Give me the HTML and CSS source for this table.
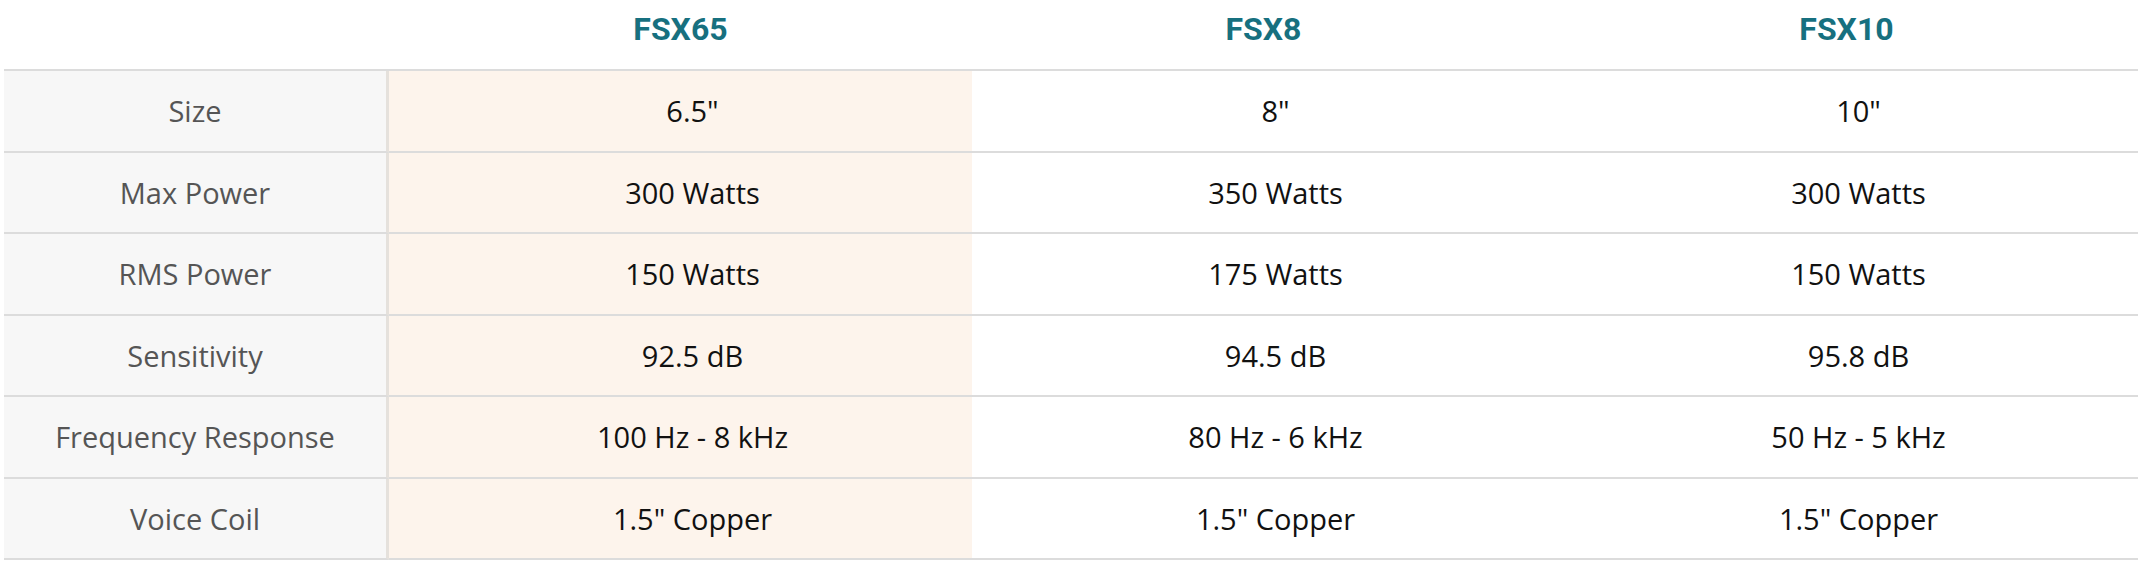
FILE: index.html
```html
<!DOCTYPE html>
<html lang="en">
<head>
<meta charset="utf-8">
<title>Speaker comparison</title>
<link rel="stylesheet" href="styles.css">
</head>
<body>
<div class="specs">
  <div class="head blank"></div>
  <div class="head">FSX65</div>
  <div class="head">FSX8</div>
  <div class="head">FSX10</div>

  <div class="cell label">Size</div>
  <div class="cell value hl">6.5"</div>
  <div class="cell value">8"</div>
  <div class="cell value">10"</div>

  <div class="cell label">Max Power</div>
  <div class="cell value hl">300 Watts</div>
  <div class="cell value">350 Watts</div>
  <div class="cell value">300 Watts</div>

  <div class="cell label">RMS Power</div>
  <div class="cell value hl">150 Watts</div>
  <div class="cell value">175 Watts</div>
  <div class="cell value">150 Watts</div>

  <div class="cell label">Sensitivity</div>
  <div class="cell value hl">92.5 dB</div>
  <div class="cell value">94.5 dB</div>
  <div class="cell value">95.8 dB</div>

  <div class="cell label">Frequency Response</div>
  <div class="cell value hl">100 Hz - 8 kHz</div>
  <div class="cell value">80 Hz - 6 kHz</div>
  <div class="cell value">50 Hz - 5 kHz</div>

  <div class="cell label">Voice Coil</div>
  <div class="cell value hl">1.5" Copper</div>
  <div class="cell value">1.5" Copper</div>
  <div class="cell value">1.5" Copper</div>
</div>
</body>
</html>
```
FILE: styles.css
```css
html, body {
  margin: 0;
  padding: 0;
  background: #ffffff;
}

body {
  font-family: Roboto, "Noto Sans", "Liberation Sans", sans-serif;
}

.specs {
  display: grid;
  grid-template-columns: 385px repeat(3, 583px);
  width: 2134px;
  margin-left: 4px;
}

.head {
  box-sizing: border-box;
  height: 71px;
  padding-bottom: 12px;
  border-bottom: 2px solid #dcdcdc;
  display: flex;
  align-items: center;
  justify-content: center;
  font-family: Roboto, "Noto Sans", sans-serif;
  font-size: 32px;
  font-weight: 700;
  color: #17707f;
}

.cell {
  box-sizing: border-box;
  height: 81.5px;
  border-bottom: 2px solid #dcdcdc;
  display: flex;
  align-items: center;
  justify-content: center;
  font-family: "Open Sans", Roboto, sans-serif;
  font-size: 29px;
  color: #111111;
}

.value {
  padding-left: 24px;
}

.label {
  background: #f7f7f7;
  color: #555555;
  border-right: 3px solid #e5e1dc;
}

.hl {
  background: #fdf4ec;
}
```
